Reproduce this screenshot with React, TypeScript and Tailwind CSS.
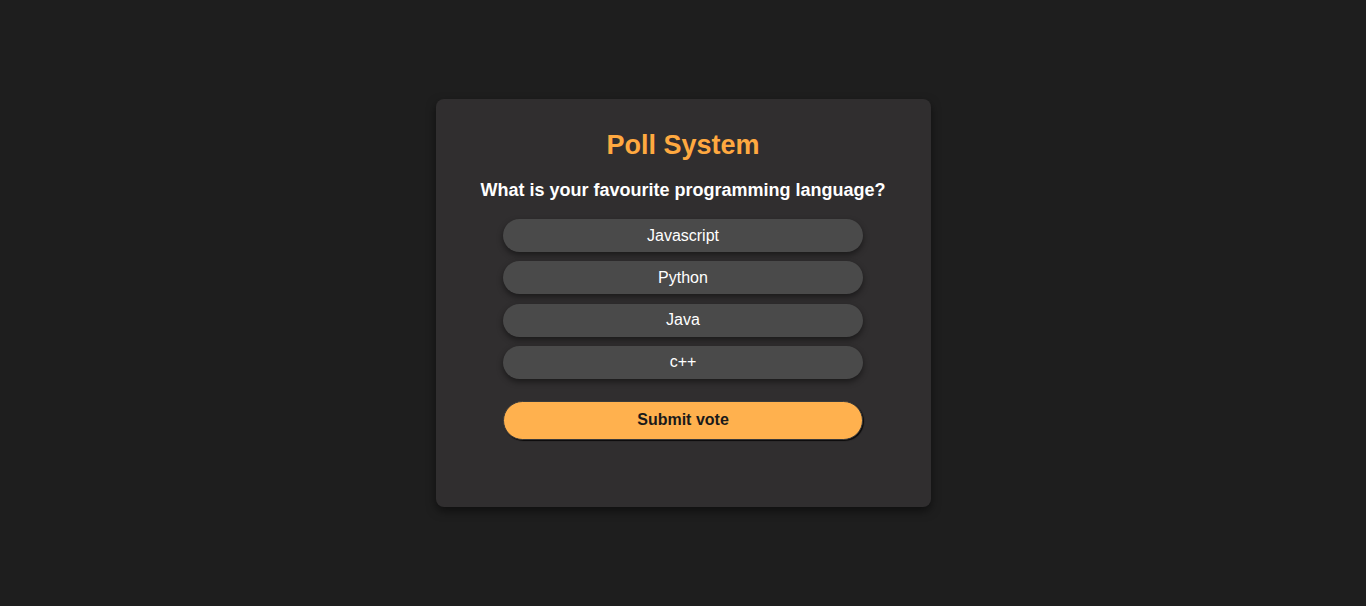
export default function App() {
  const options = ['Javascript', 'Python', 'Java', 'c++']

  return (
    <div className="min-h-screen w-full bg-[#1e1e1e] flex justify-center pt-[99px]" style={{ fontFamily: '"Liberation Sans", Arial, sans-serif' }}>
      <div className="w-[495px] h-[408px] bg-[#302e2f] rounded-lg shadow-[0_4px_10px_rgba(0,0,0,0.5)] flex flex-col items-center pt-[31px]">
        <h1 className="text-[27px] leading-[30px] font-bold text-[#ffa940]">Poll System</h1>
        <p className="mt-[19px] text-lg leading-[22px] font-bold text-white">What is your favourite programming language?</p>

        <div className="mt-[18px] w-[360px] flex flex-col gap-[9.3px]">
          {options.map((opt) => (
            <button
              key={opt}
              className="h-[33px] w-full rounded-full bg-[#4a4a4a] text-white text-base shadow-[0_3px_6px_rgba(0,0,0,0.45)]"
            >
              {opt}
            </button>
          ))}
        </div>

        <button className="mt-[22px] w-[360px] h-[39px] rounded-full bg-[#ffb14e] text-[#1a1a1a] text-base font-bold border border-[#3a3a3a] shadow-[1px_1px_1px_rgba(0,0,0,0.8)]">
          Submit vote
        </button>
      </div>
    </div>
  )
}
